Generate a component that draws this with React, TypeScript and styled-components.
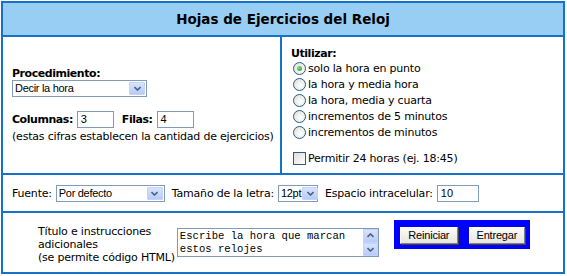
import styled, { createGlobalStyle } from "styled-components";

const Global = createGlobalStyle`
    body {
        margin: 0;
        padding: 1px;
        background: #fff;
        font-family: "DejaVu Sans", Verdana, sans-serif;
        font-size: 11px;
        letter-spacing: -0.2px;
        color: #000;
    }
`

const BLUE = "#1571c9";

const Sheet = styled.div`
    width: 560px;
    border: 2px solid ${BLUE};
    display: flex;
    flex-direction: column;
`

const Header = styled.div`
    height: 32px;
    background: #98cdf4;
    border-bottom: 2px solid ${BLUE};
    display: flex;
    align-items: center;
    justify-content: center;
    font-weight: bold;
    font-size: 13.5px;
    letter-spacing: 0;
`

const Middle = styled.div`
    height: 136px;
    display: flex;
    border-bottom: 2px solid ${BLUE};
`

const LeftCell = styled.div`
    width: 279px;
    border-right: 2px solid ${BLUE};
    display: flex;
    flex-direction: column;
    justify-content: center;
    padding: 0 0 0 9px;
    box-sizing: border-box;
`

const RightCell = styled.div`
    flex: 1;
    padding: 10px 0 0 9px;
    display: flex;
    flex-direction: column;
`

const Label = styled.div<{ $bold?: boolean }>`
    font-weight: ${(p) => (p.$bold ? "bold" : "normal")};
    letter-spacing: ${(p) => (p.$bold ? "-0.45px" : "-0.2px")};
    line-height: 13px;
    white-space: nowrap;
`

const Row = styled.div<{ $mt?: number }>`
    display: flex;
    align-items: center;
    margin-top: ${(p) => p.$mt ?? 0}px;
    white-space: nowrap;
`

const SelectBox = styled.div<{ $w: number }>`
    width: ${(p) => p.$w}px;
    height: 17px;
    box-sizing: border-box;
    border: 1px solid #7f9db9;
    background: #fff;
    display: flex;
    align-items: stretch;
    font-family: "Liberation Sans", Arial, sans-serif;
    font-size: 11px;
    letter-spacing: -0.3px;
`

const SelectText = styled.span`
    flex: 1;
    padding: 1px 0 0 2px;
    line-height: 13px;
    white-space: nowrap;
`

const Arrow = styled.span`
    width: 14px;
    flex: none;
    margin: 1px;
    border: 1px solid #c3d3fd;
    border-radius: 1px;
    background: linear-gradient(#d8e3fc, #b6cbf6);
    display: flex;
    align-items: center;
    justify-content: center;
`

const TextField = styled.div<{ $w: number }>`
    width: ${(p) => p.$w}px;
    height: 17px;
    box-sizing: border-box;
    border: 1px solid #7f9db9;
    background: #fff;
    font-family: "Liberation Sans", Arial, sans-serif;
    font-size: 11px;
    letter-spacing: 0;
    padding: 1px 0 0 3px;
    line-height: 13px;
`

const Option = styled.div`
    height: 16px;
    display: flex;
    align-items: center;
    gap: 2px;
    padding-left: 2px;
    white-space: nowrap;
`

const Radio = styled.span<{ $on?: boolean }>`
    width: 11px;
    height: 11px;
    border-radius: 50%;
    border: 1px solid #2b5a87;
    background: radial-gradient(circle at 60% 60%, #ffffff 0%, #e6e6e0 70%, #d2d2cc 100%);
    display: flex;
    align-items: center;
    justify-content: center;
    &::after {
        content: "";
        display: ${(p) => (p.$on ? "block" : "none")};
        width: 5px;
        height: 5px;
        border-radius: 50%;
        background: radial-gradient(circle at 35% 35%, #7ee07e, #1f9c1f);
    }
`

const Check = styled.span`
    width: 11px;
    height: 11px;
    border: 1px solid #2b5a87;
    background: linear-gradient(135deg, #dcdcd6, #ffffff);
`

const FontRow = styled.div`
    height: 36px;
    border-bottom: 2px solid ${BLUE};
    display: flex;
    align-items: center;
    padding-left: 9px;
    white-space: nowrap;
`

const Caption = styled.span<{ $ml?: number }>`
    margin-left: ${(p) => p.$ml ?? 0}px;
    margin-right: 4px;
`

const Bottom = styled.div`
    height: 59px;
    display: flex;
    align-items: center;
    padding-left: 35px;
`

const Notes = styled.div`
    line-height: 13px;
    padding-top: 3px;
`

const Memo = styled.div`
    width: 202px;
    height: 29px;
    margin-left: 2px;
    box-sizing: border-box;
    border: 1px solid #7f9db9;
    display: flex;
    background: #fff;
`

const MemoText = styled.div`
    flex: 1;
    font-family: "Liberation Mono", "Courier New", monospace;
    font-size: 10.6px;
    letter-spacing: 0;
    line-height: 13px;
    padding: 1px 0 0 2px;
`

const ScrollBar = styled.div`
    width: 15px;
    display: flex;
    flex-direction: column;
    justify-content: space-between;
    background: #f4f4f0;
`

const ScrollBtn = styled.span`
    height: 13px;
    border: 1px solid #c3d3fd;
    background: linear-gradient(#d8e3fc, #b6cbf6);
    display: flex;
    align-items: center;
    justify-content: center;
`

const ButtonBar = styled.div`
    align-self: flex-start;
    margin: 7px 0 0 15px;
    background: #0000ff;
    padding: 7px 5px 5px 6px;
    display: flex;
    gap: 11px;
`

const Button = styled.button<{ $w: number }>`
    width: ${(p) => p.$w}px;
    height: 17px;
    padding: 0;
    font-family: "Liberation Sans", Arial, sans-serif;
    font-size: 11px;
    letter-spacing: -0.2px;
    line-height: 13px;
    color: #000;
    background: linear-gradient(#fbfbfa, #e6e5df);
    border: 1px solid;
    border-color: #ffffff #808080 #808080 #ffffff;
    box-shadow: 1px 1px 0 #404040;
`

const Chevron = ({ up }: { up?: boolean }) => (
    <svg width="7" height="5" viewBox="0 0 7 5">
        <path d={up ? "M0.5 4 L3.5 1 L6.5 4" : "M0.5 1 L3.5 4 L6.5 1"} fill="none" stroke="#4d6185" strokeWidth="1.6" />
    </svg>
)

const Select = ({ w, value }: { w: number; value: string }) => (
    <SelectBox $w={w}>
        <SelectText>{value}</SelectText>
        <Arrow><Chevron /></Arrow>
    </SelectBox>
)

const options = [
    "solo la hora en punto",
    "la hora y media hora",
    "la hora, media y cuarta",
    "incrementos de 5 minutos",
    "incrementos de minutos",
]

export default function App() {
    return (
        <>
            <Global />
            <Sheet>
                <Header>Hojas de Ejercicios del Reloj</Header>
                <Middle>
                    <LeftCell>
                        <Label $bold>Procedimiento:</Label>
                        <Select w={135} value="Decir la hora" />
                        <Row $mt={14}>
                            <Label $bold>Columnas:</Label>
                            <TextField $w={37} style={{ marginLeft: 4 }}>3</TextField>
                            <Label $bold style={{ marginLeft: 8 }}>Filas:</Label>
                            <TextField $w={37} style={{ marginLeft: 4 }}>4</TextField>
                        </Row>
                        <Label style={{ marginTop: 2 }}>(estas cifras establecen la cantidad de ejercicios)</Label>
                    </LeftCell>
                    <RightCell>
                        <Label $bold>Utilizar:</Label>
                        {options.map((o, i) => (
                            <Option key={o}>
                                <Radio $on={i === 0} />
                                {o}
                            </Option>
                        ))}
                        <Option style={{ marginTop: 10 }}>
                            <Check />
                            Permitir 24 horas (ej. 18:45)
                        </Option>
                    </RightCell>
                </Middle>
                <FontRow>
                    <Caption>Fuente:</Caption>
                    <Select w={109} value="Por defecto" />
                    <Caption $ml={7}>Tamaño de la letra:</Caption>
                    <Select w={40} value="12pt" />
                    <Caption $ml={7}>Espacio intracelular:</Caption>
                    <TextField $w={42}>10</TextField>
                </FontRow>
                <Bottom>
                    <Notes>
                        Título e instrucciones<br />
                        adicionales<br />
                        (se permite código HTML)
                    </Notes>
                    <Memo>
                        <MemoText>
                            Escribe la hora que marcan<br />
                            estos relojes
                        </MemoText>
                        <ScrollBar>
                            <ScrollBtn><Chevron up /></ScrollBtn>
                            <ScrollBtn><Chevron /></ScrollBtn>
                        </ScrollBar>
                    </Memo>
                    <ButtonBar>
                        <Button $w={58}>Reiniciar</Button>
                        <Button $w={56}>Entregar</Button>
                    </ButtonBar>
                </Bottom>
            </Sheet>
        </>
    )
}
